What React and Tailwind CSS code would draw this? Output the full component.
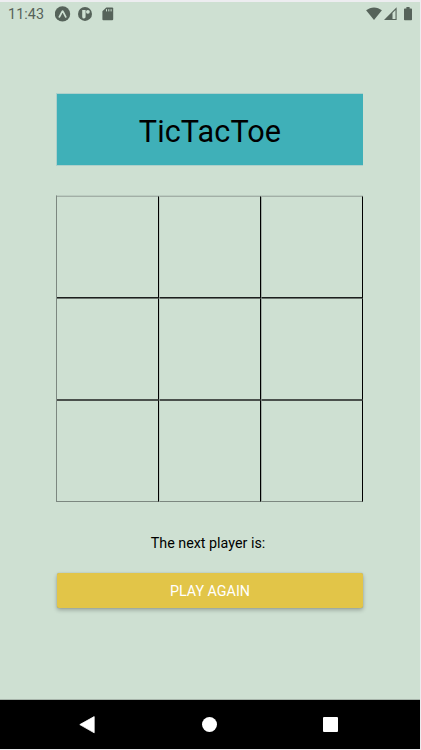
const ROWS = [
  'border-t-[#a2afa6] border-b-[#1c1f1d]',
  'border-t-[#6b746e] border-b-[#4a504c]',
  'border-t-[#4a504c] border-b-[#7c8780]',
];

const COLUMNS = ['', 'border-l border-l-[#bccbc0]', 'border-l border-l-[#a2afa6]'];

function StatusBar() {
  return (
    <div className="flex h-6 shrink-0 items-center pl-2 pr-2 text-[#56635a]">
      <span className="w-[47px] text-[14.3px] leading-6 tracking-[0.1px]">11:43</span>
      <svg className="h-4 w-4" viewBox="0 0 16 16">
        <circle cx="7.5" cy="7.9" r="7.7" fill="currentColor" />
        <path d="M4.3 10.9C5.6 9 6.4 6.7 7.6 5.1C8.8 6.7 9.5 9 10.8 10.9" fill="none" stroke="#cee0d2" strokeWidth="1.7" strokeLinecap="round" strokeLinejoin="round" />
      </svg>
      <svg className="ml-[7px] h-4 w-4" viewBox="0 0 16 16">
        <circle cx="7" cy="7.9" r="7" fill="currentColor" />
        <path d="M4.2 3.9H7.6V10.2A2.1 2.1 0 0 1 6.1 12.6Q4.2 12.8 4.2 10.4Z" fill="#cee0d2" />
        <circle cx="9.9" cy="5.8" r="1.9" fill="#cee0d2" />
      </svg>
      <svg className="ml-2 h-4 w-3" viewBox="0 0 12 16">
        <path d="M4.3 1.4H10.2Q11.2 1.4 11.2 2.4V13.2Q11.2 14.2 10.2 14.2H1.4Q.4 14.2 .4 13.2V5.3Z" fill="currentColor" />
        <path d="M4.5 3.2V5.4M6.8 3.2V5.4M9.1 3.2V5.4" stroke="#cee0d2" strokeWidth="1" />
      </svg>
      <svg className="ml-auto h-4 w-4" viewBox="0 0 16 16">
        <path d="M.1 4.3C4.7 .4 11.3 .4 15.9 4.3L8 14.1Z" fill="currentColor" />
      </svg>
      <svg className="ml-0.5 h-4 w-[13px]" viewBox="0 0 13 16">
        <path d="M0 14L12.6 1.3V14Z" fill="currentColor" />
        <path d="M8.5 7V13H11.5V4Z" fill="#cee0d2" />
      </svg>
      <svg className="ml-[7px] h-4 w-2" viewBox="0 0 8 16">
        <path d="M2.4 1H5.6V2.4H7.2Q8 2.4 8 3.2V13.4Q8 14.2 7.2 14.2H.8Q0 14.2 0 13.4V3.2Q0 2.4 .8 2.4H2.4Z" fill="currentColor" />
      </svg>
    </div>
  );
}

function Board() {
  return (
    <div className="mt-[29px] w-[307px] border-t border-l border-t-[#bccdc1] border-l-[#7c8780]">
      {ROWS.map((row) => (
        <div key={row} className="grid grid-cols-3">
          {COLUMNS.map((column) => (
            <button key={column} className={`block h-[102px] border-y border-r border-r-black ${row} ${column}`} />
          ))}
        </div>
      ))}
    </div>
  );
}

function NavigationBar() {
  return (
    <div className="flex h-[50px] shrink-0 items-center border-t border-[#a7b4aa] bg-black pl-[79px]">
      <svg className="h-[18px] w-4" viewBox="0 0 16 18">
        <path d="M.8 8.6L15.2 .6V16.8Z" fill="white" stroke="white" strokeWidth=".8" strokeLinejoin="round" />
      </svg>
      <div className="ml-[107px] h-[15px] w-[15px] rounded-full bg-white" />
      <div className="ml-[106px] h-[15px] w-[15px] rounded-[1px] bg-white" />
    </div>
  );
}

export default function App() {
  return (
    <div className="h-[750px] w-[421px] bg-[#ededf0] pt-0.5 pr-px pb-px font-['Roboto',sans-serif]">
      <div className="flex h-[747px] flex-col bg-[#cee0d2]">
        <StatusBar />
        <main className="flex flex-1 flex-col pt-[67px] pl-14">
          <h1 className="h-[73px] w-[307px] border-y border-l border-[#aed0cb] bg-[#3fb0b8] pt-0.5 text-center text-[30.6px] leading-[71px] tracking-[0.1px] text-black">
            TicTacToe
          </h1>
          <Board />
          <p className="mt-[31px] w-[304px] text-center text-[14.3px] leading-5 text-black">The next player is:</p>
          <button className="mt-5 ml-px h-[35px] w-[306px] rounded-[2px] bg-[#e2c548] text-center text-[14.3px] leading-[36px] text-white shadow-[0_2px_4px_rgba(0,0,0,0.28),0_0_1px_rgba(0,0,0,0.25)]">
            PLAY AGAIN
          </button>
        </main>
        <NavigationBar />
      </div>
    </div>
  );
}
